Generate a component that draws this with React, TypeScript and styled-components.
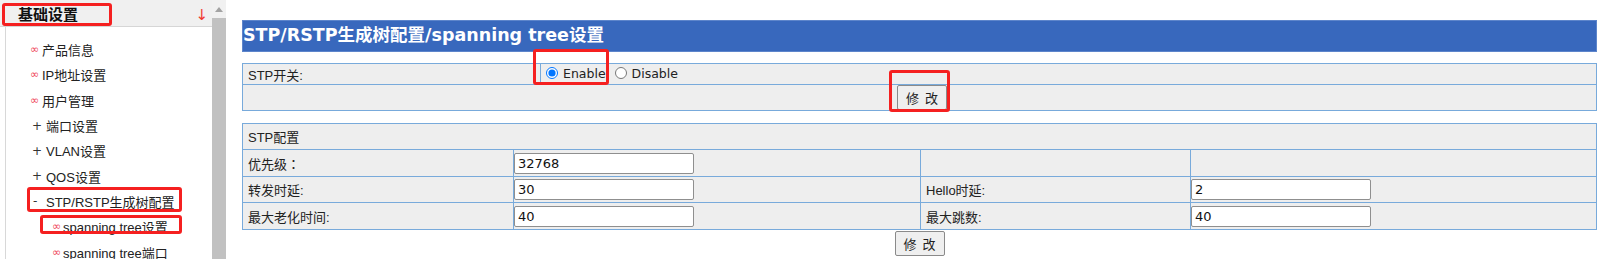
import React from 'react';
import styled, { createGlobalStyle } from 'styled-components';

const GlobalStyle = createGlobalStyle`
  html, body { margin: 0; padding: 0; background: #fff; }
  body {
    font-family: "Liberation Sans", "Noto Sans CJK SC", sans-serif;
    font-size: 13px;
    color: #222;
  }
`;

const Page = styled.div`
  position: relative;
  display: flex;
  height: 259px;
  overflow: hidden;
`;

const Sidebar = styled.aside`
  width: 212px;
  flex-shrink: 0;
  display: flex;
  flex-direction: column;
`;

const SideHeader = styled.div`
  height: 34px;
  box-sizing: border-box;
  background: #f0f0f0;
  border-bottom: 1px solid #d6d6d6;
  display: flex;
  align-items: flex-start;
  justify-content: space-between;
  padding: 4px 4px 0 18px;
`;

const SideTitle = styled.span`
  font-size: 15px;
  font-weight: bold;
  line-height: 22px;
  color: #111;
`;

const SideArrow = styled.span`
  font-family: "DejaVu Sans", sans-serif;
  color: #f0392f;
  font-size: 15px;
  line-height: 22px;
`;

const MenuList = styled.ul`
  list-style: none;
  margin: 0 0 0 5px;
  padding: 10px 0 0 0;
  flex: 1;
  border-left: 1px solid #d8d8d8;
`;

const MenuItem = styled.li<{ $indent: number }>`
  display: flex;
  align-items: center;
  height: 25.3px;
  padding-left: ${(p) => p.$indent}px;
  font-size: 13px;
  color: #222;
  white-space: nowrap;
`;

const Marker = styled.span<{ $w: number; $red?: boolean }>`
  display: inline-block;
  width: ${(p) => p.$w}px;
  color: ${(p) => (p.$red ? '#ef4a5c' : '#333')};
  font-size: ${(p) => (p.$red ? '11px' : '12px')};
  font-family: "DejaVu Sans", sans-serif;
`;

const ScrollTrack = styled.div`
  width: 14px;
  flex-shrink: 0;
  background: #f1f1f1;
  display: flex;
  flex-direction: column;
  align-items: stretch;
`;

const ScrollArrow = styled.div`
  height: 18px;
  display: flex;
  align-items: center;
  justify-content: center;
  &::before {
    content: '';
    border-left: 4px solid transparent;
    border-right: 4px solid transparent;
    border-bottom: 5px solid #a3a3a3;
  }
`;

const ScrollThumb = styled.div`
  flex: 1;
  background: #c1c1c1;
`;

const Main = styled.main`
  flex: 1;
  margin-left: 16px;
  margin-right: 3px;
  padding-top: 20px;
  display: flex;
  flex-direction: column;
`;

const TitleBar = styled.div`
  height: 32px;
  box-sizing: border-box;
  background: #3868bd;
  border: 1px solid #5d85cb;
  color: #fff;
  font-family: "DejaVu Sans", "Noto Sans CJK SC", sans-serif;
  font-weight: bold;
  font-size: 17.5px;
  line-height: 29px;
  white-space: nowrap;
`;

const Table = styled.table<{ $mt: number }>`
  width: 100%;
  margin-top: ${(p) => p.$mt}px;
  border-collapse: collapse;
  background: #eeeeee;
  border: 1px solid #a9c8e2;
  table-layout: fixed;
`;

const Cell = styled.td<{ $h: number; $center?: boolean }>`
  height: ${(p) => p.$h}px;
  padding: 0 0 0 5px;
  border: 1px solid #78aadb;
  text-align: ${(p) => (p.$center ? 'center' : 'left')};
  vertical-align: middle;
  font-size: 13px;
  color: #222;
  white-space: nowrap;
`;

const InputCell = styled(Cell)`
  padding: 0;
`;

const Colon = styled.span`
  font-family: "Noto Sans CJK JP", sans-serif;
`;

const TextInput = styled.input`
  display: block;
  width: 180px;
  height: 21px;
  box-sizing: border-box;
  margin: 0;
  padding: 0 3px;
  border: 1px solid #8f8f8f;
  border-radius: 2px;
  background: #fff;
  font-family: "DejaVu Sans", sans-serif;
  font-size: 13px;
  color: #111;
`;

const RadioLabel = styled.label`
  display: inline-flex;
  align-items: center;
  font-family: "DejaVu Sans", sans-serif;
  font-size: 12.5px;
  margin-right: 9px;
  input { margin: 0 5px 0 0; width: 12px; height: 12px; }
`;

const Button = styled.button`
  width: 50px;
  height: 25px;
  box-sizing: border-box;
  border: 1px solid #8a8a8a;
  border-radius: 2px;
  background: #efefef;
  font-family: "Noto Sans CJK SC", sans-serif;
  font-size: 13px;
  color: #222;
  padding: 0;
  white-space: pre;
`;

const Center = styled.div`
  display: flex;
  justify-content: center;
  margin-top: 1px;
`;

const Highlight = styled.div<{ $x: number; $y: number; $w: number; $h: number }>`
  position: absolute;
  left: ${(p) => p.$x}px;
  top: ${(p) => p.$y}px;
  width: ${(p) => p.$w}px;
  height: ${(p) => p.$h}px;
  box-sizing: border-box;
  border: 3px solid #f52020;
  border-radius: 3px;
  pointer-events: none;
`;

type Item = { mark: string; red?: boolean; indent: number; w: number; text: string };

const menu: Item[] = [
  { mark: '∞', red: true, indent: 24, w: 12, text: '产品信息' },
  { mark: '∞', red: true, indent: 24, w: 12, text: 'IP地址设置' },
  { mark: '∞', red: true, indent: 24, w: 12, text: '用户管理' },
  { mark: '+', indent: 26, w: 14, text: '端口设置' },
  { mark: '+', indent: 26, w: 14, text: 'VLAN设置' },
  { mark: '+', indent: 26, w: 14, text: 'QOS设置' },
  { mark: '-', indent: 27, w: 13, text: 'STP/RSTP生成树配置' },
  { mark: '∞', red: true, indent: 46, w: 11, text: 'spanning tree设置' },
  { mark: '∞', red: true, indent: 46, w: 11, text: 'spanning tree端口' },
];

export default function App() {
  return (
    <>
      <GlobalStyle />
      <Page>
        <Sidebar>
          <SideHeader>
            <SideTitle>基础设置</SideTitle>
            <SideArrow>↓</SideArrow>
          </SideHeader>
          <MenuList>
            {menu.map((m, i) => (
              <MenuItem key={i} $indent={m.indent}>
                <Marker $w={m.w} $red={m.red}>{m.mark}</Marker>
                {m.text}
              </MenuItem>
            ))}
          </MenuList>
        </Sidebar>
        <ScrollTrack>
          <ScrollArrow />
          <ScrollThumb />
        </ScrollTrack>
        <Main>
          <TitleBar>STP/RSTP生成树配置/spanning tree设置</TitleBar>
          <Table $mt={11}>
            <colgroup>
              <col style={{ width: 298 }} />
              <col />
            </colgroup>
            <tbody>
              <tr>
                <Cell $h={20}>STP开关:</Cell>
                <Cell $h={20}>
                  <RadioLabel>
                    <input type="radio" name="stp" defaultChecked />
                    Enable
                  </RadioLabel>
                  <RadioLabel>
                    <input type="radio" name="stp" />
                    Disable
                  </RadioLabel>
                </Cell>
              </tr>
              <tr>
                <Cell $h={25} $center colSpan={2}>
                  <Button>修  改</Button>
                </Cell>
              </tr>
            </tbody>
          </Table>
          <Table $mt={12}>
            <colgroup>
              <col style={{ width: 271 }} />
              <col style={{ width: 407 }} />
              <col style={{ width: 270 }} />
              <col />
            </colgroup>
            <tbody>
              <tr>
                <Cell $h={25} colSpan={4}>STP配置</Cell>
              </tr>
              <tr>
                <Cell $h={26}>优先级<Colon>：</Colon></Cell>
                <InputCell $h={26}><TextInput defaultValue="32768" /></InputCell>
                <Cell $h={26}></Cell>
                <Cell $h={26}></Cell>
              </tr>
              <tr>
                <Cell $h={25}>转发时延:</Cell>
                <InputCell $h={25}><TextInput defaultValue="30" /></InputCell>
                <Cell $h={25}>Hello时延:</Cell>
                <InputCell $h={25}><TextInput defaultValue="2" /></InputCell>
              </tr>
              <tr>
                <Cell $h={26}>最大老化时间:</Cell>
                <InputCell $h={26}><TextInput defaultValue="40" /></InputCell>
                <Cell $h={26}>最大跳数:</Cell>
                <InputCell $h={26}><TextInput defaultValue="40" /></InputCell>
              </tr>
            </tbody>
          </Table>
          <Center>
            <Button>修  改</Button>
          </Center>
        </Main>
        <Highlight $x={2} $y={3} $w={110} $h={23} />
        <Highlight $x={27} $y={187} $w={155} $h={25} />
        <Highlight $x={40} $y={215} $w={142} $h={19} />
        <Highlight $x={533} $y={49} $w={76} $h={36} />
        <Highlight $x={889} $y={70} $w={61} $h={42} />
      </Page>
    </>
  );
}
